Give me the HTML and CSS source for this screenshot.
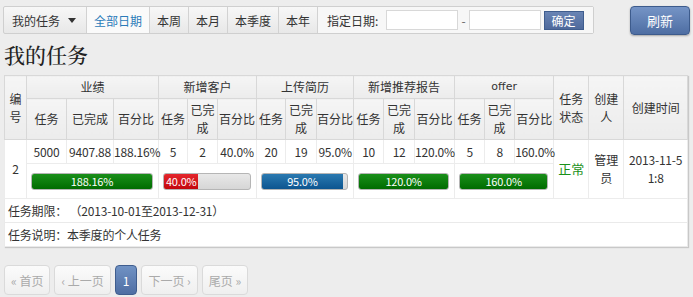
FILE: index.html
```html
<!DOCTYPE html>
<html lang="zh-CN">
<head>
  <meta charset="UTF-8" />
  <title>我的任务</title>
  <link rel="stylesheet" href="styles.css">
</head>
<body>
  <div class="topbar">
    <div class="toolbar">
      <span class="tb-item tb-menu">我的任务 <i class="caret"></i></span>
      <span class="tb-item active">全部日期</span>
      <span class="tb-item">本周</span>
      <span class="tb-item">本月</span>
      <span class="tb-item">本季度</span>
      <span class="tb-item">本年</span>
      <span class="tb-range">
        <label>指定日期:</label>
        <input type="text" class="date-input">
        <span class="dash">-</span>
        <input type="text" class="date-input">
        <button class="btn-ok">确定</button>
      </span>
    </div>
    <button class="btn-refresh">刷新</button>
  </div>

  <h2 class="page-title">我的任务</h2>

  <table class="task-table">
    <colgroup>
      <col style="width:22px"><col style="width:40px"><col style="width:47px"><col style="width:45px">
      <col style="width:29px"><col style="width:30px"><col style="width:39px">
      <col style="width:29px"><col style="width:31px"><col style="width:37px">
      <col style="width:30px"><col style="width:31px"><col style="width:40px">
      <col style="width:30px"><col style="width:30px"><col style="width:39px">
      <col style="width:35px"><col style="width:35px"><col style="width:64px">
    </colgroup>
    <tr class="head-1">
      <th rowspan="2">编号</th>
      <th colspan="3">业绩</th>
      <th colspan="3">新增客户</th>
      <th colspan="3">上传简历</th>
      <th colspan="3">新增推荐报告</th>
      <th colspan="3" class="latin">offer</th>
      <th rowspan="2">任务状态</th>
      <th rowspan="2">创建人</th>
      <th rowspan="2">创建时间</th>
    </tr>
    <tr class="head-2">
      <th>任务</th><th>已完成</th><th>百分比</th>
      <th>任务</th><th>已完成</th><th>百分比</th>
      <th>任务</th><th>已完成</th><th>百分比</th>
      <th>任务</th><th>已完成</th><th>百分比</th>
      <th>任务</th><th>已完成</th><th>百分比</th>
    </tr>
    <tr class="row-num">
      <td rowspan="2">2</td>
      <td>5000</td><td>9407.88</td><td>188.16%</td>
      <td>5</td><td>2</td><td>40.0%</td>
      <td>20</td><td>19</td><td>95.0%</td>
      <td>10</td><td>12</td><td>120.0%</td>
      <td>5</td><td>8</td><td>160.0%</td>
      <td rowspan="2" class="status">正常</td>
      <td rowspan="2">管理员</td>
      <td rowspan="2">2013-11-5 1:8</td>
    </tr>
    <tr class="row-bar">
      <td colspan="3"><div class="progress"><div class="bar green" style="width:100%">188.16%</div></div></td>
      <td colspan="3"><div class="progress"><div class="bar red" style="width:40%">40.0%</div></div></td>
      <td colspan="3"><div class="progress"><div class="bar blue" style="width:95%">95.0%</div></div></td>
      <td colspan="3"><div class="progress"><div class="bar green" style="width:100%">120.0%</div></div></td>
      <td colspan="3"><div class="progress"><div class="bar green" style="width:100%">160.0%</div></div></td>
    </tr>
    <tr class="row-info">
      <td colspan="19">任务期限：&nbsp;（2013-10-01至2013-12-31）</td>
    </tr>
    <tr class="row-info">
      <td colspan="19">任务说明：本季度的个人任务</td>
    </tr>
  </table>

  <div class="pager">
    <span class="pg">« 首页</span>
    <span class="pg">‹ 上一页</span>
    <span class="pg current">1</span>
    <span class="pg">下一页 ›</span>
    <span class="pg">尾页 »</span>
  </div>
</body>
</html>
```

FILE: styles.css
```css
body {
  background-color: #ededed;
  color: #333;
  font-family: "Noto Sans CJK SC", "Liberation Sans", sans-serif;
  font-size: 12px;
  margin: 0;
  padding: 6px 3px 0 3px;
}

.topbar {
  display: flex;
  justify-content: space-between;
  align-items: flex-start;
}

.toolbar {
  display: flex;
  align-items: stretch;
  height: 26px;
  border: 1px solid #cfcfcf;
  border-radius: 2px;
  background: linear-gradient(#f7f7f7, #e8e8e8);
}

.tb-item {
  display: flex;
  align-items: center;
  padding: 0 7px;
  border-right: 1px solid #d2d2d2;
  color: #333;
}

.tb-menu {
  padding: 0 10px 0 8px;
  gap: 8px;
}

.caret {
  width: 0;
  height: 0;
  border-left: 4px solid transparent;
  border-right: 4px solid transparent;
  border-top: 5px solid #333;
}

.tb-item.active {
  background: #fafafa;
  color: #2b7bb9;
}

.tb-range {
  display: flex;
  align-items: center;
  padding: 0 9px 0 9px;
  background: #f7f7f7;
}

.tb-range label {
  margin-right: 8px;
}

.date-input {
  width: 70px;
  height: 18px;
  padding: 0;
  border: 1px solid #d8d8d8;
  background: #fff;
}

.dash {
  margin: 0 3px;
  color: #666;
}

.btn-ok {
  margin-left: 3px;
  height: 19px;
  width: 40px;
  padding: 0;
  border: 1px solid #3f5d8e;
  background: linear-gradient(#6984b4, #4f6a9c);
  color: #fff;
  font-family: inherit;
  font-size: 12px;
}

.btn-refresh {
  width: 60px;
  height: 29px;
  border: 1px solid #3d5b8c;
  border-radius: 4px;
  background: linear-gradient(#7594c6, #4e6ea3);
  color: #fff;
  font-family: inherit;
  font-size: 13px;
  box-shadow: 0 1px 2px rgba(0,0,0,0.3);
}

.page-title {
  font-family: "Noto Serif CJK SC", "Noto Sans CJK SC", serif;
  font-size: 21px;
  font-weight: 500;
  color: #222;
  margin: 6px 0 8px 1px;
  line-height: 26px;
}

.task-table {
  table-layout: fixed;
  width: 684px;
  margin-left: 1px;
  border-collapse: collapse;
  background: #fff;
  border: 1px solid #cfcfcf;
  box-shadow: 1px 1px 1px #c8c8c8;
}

.task-table th,
.task-table td {
  border: 1px solid #e2e2e2;
  text-align: center;
  padding: 0;
  line-height: 18px;
}

.task-table th {
  background: linear-gradient(#f5f5f5, #ececec);
  font-weight: normal;
  border-color: #d8d8d8;
  padding: 0;
}

.latin {
  font-family: "DejaVu Sans", sans-serif;
  font-size: 11px;
}

.head-1 {
  height: 23px;
}

.head-2 {
  height: 41px;
}

.row-num {
  height: 24px;
}

.row-bar {
  height: 35px;
}

.row-bar td {
  padding: 0 5px 0 4px;
}

.task-table td {
  border-color: #ececec;
  letter-spacing: -0.2px;
}

.status {
  color: #189018;
  font-size: 13px;
}

.progress {
  height: 15px;
  border: 1px solid #b5b5b5;
  border-radius: 3px;
  background: linear-gradient(#e8e8e8, #d6d6d6);
  overflow: hidden;
}

.bar {
  height: 100%;
  color: #fff;
  font-size: 11px;
  line-height: 15px;
  text-align: center;
}

.bar.green {
  background: linear-gradient(#1a8f1a, #006c00);
}

.bar.red {
  background: linear-gradient(#e4262c, #c3070d);
}

.bar.blue {
  background: linear-gradient(#2a79b0, #0d5590);
}

.row-info {
  height: 24px;
}

.row-info td {
  text-align: left;
  padding-left: 3px;
  border-color: #eaeaea;
}

.pager {
  display: flex;
  gap: 4px;
  margin: 18px 0 0 1px;
}

.pg {
  display: flex;
  align-items: center;
  justify-content: center;
  height: 28px;
  padding: 0 6px;
  border: 1px solid #dadada;
  border-radius: 4px;
  background: linear-gradient(#fbfbfb, #efefef);
  color: #aaa;
}

.pg.current {
  padding: 0 7px;
  border-color: #3f5d8e;
  background: linear-gradient(#7092c4, #4f6ea3);
  color: #fff;
}
```
